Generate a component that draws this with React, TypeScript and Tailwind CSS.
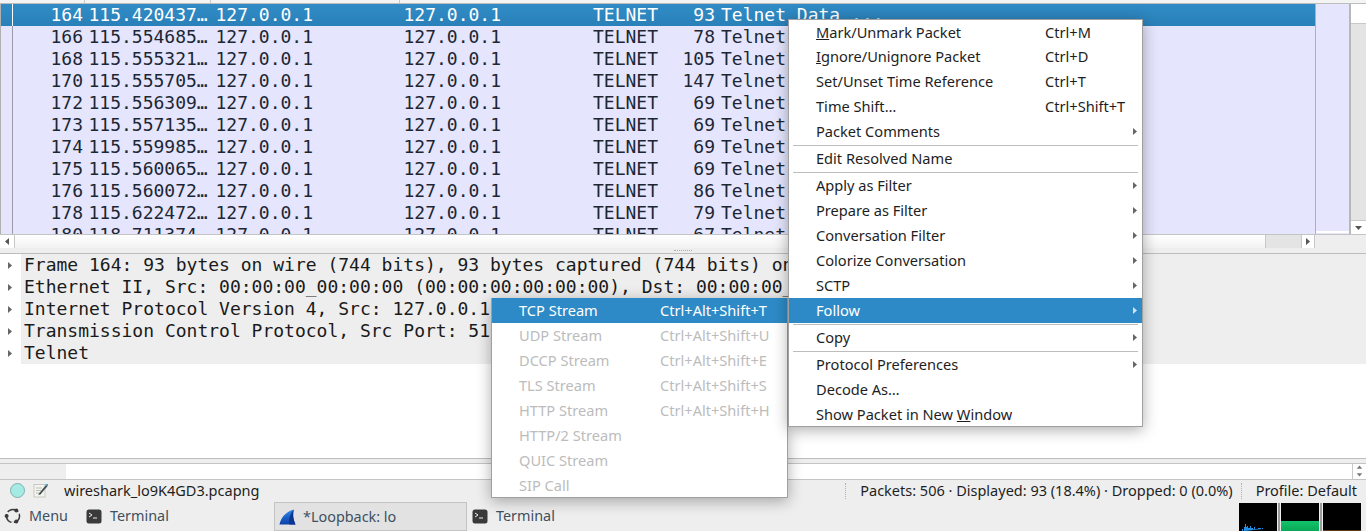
import React from "react";

const mono = "font-['DejaVu_Sans_Mono',monospace]";

const packets = [
  ["164", "115.420437…", "93"],
  ["166", "115.554685…", "78"],
  ["168", "115.555321…", "105"],
  ["170", "115.555705…", "147"],
  ["172", "115.556309…", "69"],
  ["173", "115.557135…", "69"],
  ["174", "115.559985…", "69"],
  ["175", "115.560065…", "69"],
  ["176", "115.560072…", "86"],
  ["178", "115.622472…", "79"],
  ["180", "118.711374…", "67"],
];

const details = [
  "Frame 164: 93 bytes on wire (744 bits), 93 bytes captured (744 bits) on interface lo, id 0",
  "Ethernet II, Src: 00:00:00_00:00:00 (00:00:00:00:00:00), Dst: 00:00:00_00:00:00 (00:00:00:00:00:00)",
  "Internet Protocol Version 4, Src: 127.0.0.1, Dst: 127.0.0.1",
  "Transmission Control Protocol, Src Port: 51234, Dst Port: 23, Seq: 1, Ack: 1, Len: 27",
  "Telnet",
];

const Tri = ({ dir, className }: { dir: "l" | "r" | "d" | "u"; className?: string }) => {
  const pts = { l: "6,1 2,4.5 6,8", r: "2,1 6,4.5 2,8", d: "1,3 8,3 4.5,7", u: "1,6 8,6 4.5,2" }[dir];
  return (
    <svg width="9" height="9" viewBox="0 0 9 9" className={className}>
      <polygon points={pts} fill="currentColor" />
    </svg>
  );
};

const PacketRow = ({ row, selected }: { row: string[]; selected: boolean }) => (
  <div
    className={`flex h-[22px] shrink-0 whitespace-pre text-[18px] leading-[21px] ${
      selected
        ? "bg-gradient-to-b from-[#308cc6] to-[#2a80b8] text-white"
        : "text-[#1c2733]"
    }`}
  >
    <div className={`h-full w-[12px] shrink-0 border-r ${selected ? "border-white" : "border-[#9a9aa8]"}`} />
    <div className="w-[70px] shrink-0 text-right">{row[0]}</div>
    <div className="ml-[5.5px] w-[127px] shrink-0">{row[1]}</div>
    <div className="w-[188px] shrink-0">127.0.0.1</div>
    <div className="w-[189.5px] shrink-0">127.0.0.1</div>
    <div className="w-[75px] shrink-0">TELNET</div>
    <div className="w-[47px] shrink-0 text-right">{row[2]}</div>
    <div className="ml-[6px]">Telnet Data ...</div>
  </div>
);

const DetailRow = ({ text }: { text: string }) => (
  <div className="flex h-[22px] items-center">
    <div className="flex w-[21px] shrink-0 justify-center bg-white text-[#666]">
      <Tri dir="r" />
    </div>
    <div className="h-full flex-1 overflow-hidden whitespace-pre bg-[#eeeeee] pl-[3px] text-[18px] leading-[22px] text-[#1a1a1a]">
      {text}
    </div>
  </div>
);

const MenuItem = ({
  label,
  shortcut,
  arrow,
  active,
  disabled,
  tall,
  keyX,
}: {
  label: React.ReactNode;
  shortcut?: string;
  arrow?: boolean;
  active?: boolean;
  disabled?: boolean;
  tall?: string;
  keyX: string;
}) => (
  <div
    className={`flex items-center whitespace-pre pl-[27px] leading-[20px] ${tall ?? "h-[25px]"} ${
      active
        ? "bg-[#2e8ac6] text-white"
        : disabled
          ? "text-[#bcbcbc]"
          : "text-[#1e1e1e]"
    }`}
  >
    <div className={`${keyX} shrink-0`}>{label}</div>
    {shortcut && <div>{shortcut}</div>}
    {arrow && (
      <Tri dir="r" className={`ml-auto mr-[2px] ${active ? "text-[#cfe3f2]" : "text-[#666]"}`} />
    )}
  </div>
);

const Sep = () => (
  <div className="flex h-[2px] items-center px-[4px]">
    <div className="h-[1px] w-full bg-[#bdbdbd]" />
  </div>
);

const MainItem = (p: { label: React.ReactNode; shortcut?: string; arrow?: boolean; active?: boolean; tall?: string }) => (
  <MenuItem {...p} tall={p.tall ?? "h-[25px] pb-[1px]"} keyX="w-[229px]" />
);

const SubItem = (p: { label: string; shortcut?: string; active?: boolean }) => (
  <MenuItem {...p} disabled={!p.active} keyX="w-[141px]" />
);

const ContextMenu = () => (
  <div className="absolute left-[788px] top-[19px] z-20 flex h-[408px] w-[355px] flex-col border border-[#a0a0a0] bg-white text-[14.6px] shadow-[0_3px_14px_rgba(0,0,0,0.32)]">
    <MainItem tall="h-[24px] pb-[1px]" label={<><u>M</u>ark/Unmark Packet</>} shortcut="Ctrl+M" />
    <MainItem label={<><u>I</u>gnore/Unignore Packet</>} shortcut="Ctrl+D" />
    <MainItem label="Set/Unset Time Reference" shortcut="Ctrl+T" />
    <MainItem label="Time Shift…" shortcut="Ctrl+Shift+T" />
    <MainItem label="Packet Comments" arrow />
    <Sep />
    <MainItem label="Edit Resolved Name" />
    <Sep />
    <MainItem label="Apply as Filter" arrow />
    <MainItem label="Prepare as Filter" arrow />
    <MainItem label="Conversation Filter" arrow />
    <MainItem label="Colorize Conversation" arrow />
    <MainItem label="SCTP" arrow />
    <MainItem label="Follow" arrow active />
    <Sep />
    <MainItem label="Copy" arrow />
    <Sep />
    <MainItem label="Protocol Preferences" arrow />
    <MainItem label="Decode As…" />
    <MainItem tall="h-[24px]" label={<>Show Packet in New <u>W</u>indow</>} />
  </div>
);

const FollowMenu = () => (
  <div className="absolute left-[491px] top-[298px] z-10 flex h-[200px] w-[297px] flex-col border-x border-b border-[#a0a0a0] bg-white text-[14.6px] shadow-[0_3px_14px_rgba(0,0,0,0.32)]">
    <SubItem label="TCP Stream" shortcut="Ctrl+Alt+Shift+T" active />
    <SubItem label="UDP Stream" shortcut="Ctrl+Alt+Shift+U" />
    <SubItem label="DCCP Stream" shortcut="Ctrl+Alt+Shift+E" />
    <SubItem label="TLS Stream" shortcut="Ctrl+Alt+Shift+S" />
    <SubItem label="HTTP Stream" shortcut="Ctrl+Alt+Shift+H" />
    <SubItem label="HTTP/2 Stream" />
    <SubItem label="QUIC Stream" />
    <SubItem label="SIP Call" />
  </div>
);

const TerminalIcon = () => (
  <svg width="16" height="15" viewBox="0 0 16 15" className="shrink-0">
    <rect x="0.5" y="0.5" width="15" height="14" rx="2.5" fill="#3a3a3a" />
    <path d="M3 4l3 2-3 2" stroke="#eee" strokeWidth="1" fill="none" />
    <path d="M7 9h4" stroke="#eee" strokeWidth="1" />
  </svg>
);

const MenuLogo = () => (
  <svg width="18" height="18" viewBox="0 0 18 18" className="shrink-0">
    <circle cx="9" cy="9" r="6.6" fill="none" stroke="#3a3a3a" strokeWidth="1.5" />
    <path d="M9 0v4M1 14l3.5-2M17 14l-3.5-2" stroke="#eeeeee" strokeWidth="2.4" transform="rotate(60 9 9)" />
    <circle cx="2.6" cy="9" r="2" fill="#3a3a3a" />
    <circle cx="12.3" cy="3.4" r="2" fill="#3a3a3a" />
    <circle cx="12.3" cy="14.6" r="2" fill="#3a3a3a" />
  </svg>
);

const SharkFin = () => (
  <svg width="17" height="16" viewBox="0 0 17 16" className="shrink-0">
    <defs>
      <linearGradient id="fin" x1="0" y1="0" x2="0" y2="1">
        <stop offset="0" stopColor="#2f86e8" />
        <stop offset="1" stopColor="#0b3fa8" />
      </linearGradient>
    </defs>
    <path d="M0.5 15.5C2 9 6 3 15 0.5c-1.5 4-1 10 1.5 15z" fill="url(#fin)" />
    <path d="M10.5 15.5c-1-5 0-10 4.5-15-1.5 4-1 10 1.5 15z" fill="#0a3590" />
  </svg>
);

const NoteIcon = () => (
  <svg width="15" height="15" viewBox="0 0 15 15" className="shrink-0">
    <rect x="1" y="1.5" width="11" height="12.5" fill="#f4f4ee" stroke="#b8b8b0" strokeWidth="0.7" />
    <path d="M3 5h6M3 7.5h5M3 10h4" stroke="#b0b0a8" strokeWidth="0.8" />
    <path d="M6 10.5L13 2l1.4 1.2-7 8.3-2 .6z" fill="#3f4a55" />
    <path d="M12 1h3v2.5z" fill="#3aa2d8" />
  </svg>
);

const Dots = () => <div className="h-[16px] w-0 border-l border-dotted border-[#b0b0b0]" />;

const GraphBox = ({ children }: { children?: React.ReactNode }) => (
  <div className="relative h-[28px] w-[38px] shrink-0 overflow-hidden bg-black">{children}</div>
);

const GraphSep = () => <div className="mx-[1px] h-[28px] w-[2px] bg-[#9c9c9c]" />;

export default function App() {
  return (
    <div className="relative flex h-[531px] w-[1366px] flex-col overflow-hidden bg-[#eeeeee] font-['Noto_Sans',sans-serif]">
      {/* header strip */}
      <div className="flex h-[4px] shrink-0 border-b border-[#bdbdbd] bg-[#f4f4f4]">
        <div className="h-full w-[85px] border-r border-[#c8c8c8]" />
        <div className="h-full w-[126px] border-r border-[#c8c8c8]" />
        <div className="h-full w-[189px] border-r border-[#c8c8c8]" />
      </div>

      {/* packet list */}
      <div className="flex h-[244px] shrink-0 flex-col">
        <div className="flex h-[230px] shrink-0">
          <div className={`w-[1316px] shrink-0 overflow-hidden border-x border-[#b0b0b0] bg-[#e5e5fd] ${mono}`}>
            <div className="flex flex-col">
              {packets.map((row, i) => (
                <PacketRow key={row[0]} row={row} selected={i === 0} />
              ))}
            </div>
          </div>
          <div className="w-[35px] shrink-0 border-r-2 border-[#b8b8b8] bg-[#e5e5fd]">
            <div className="mt-[227px] h-[2px] bg-white" />
          </div>
          <div className="flex w-[15px] shrink-0 flex-col">
            <div className="h-[19px] bg-white" />
            <div className="flex-1 border-t border-[#c8c8c8] bg-[#e4e4e4]" />
            <div className="flex h-[14px] items-center justify-center border-t border-[#c8c8c8] bg-white text-[#555]">
              <Tri dir="d" />
            </div>
          </div>
        </div>
        <div className="flex h-[15px] shrink-0 border-y border-[#c4c4c4]">
          <div className="flex w-[15px] items-center justify-center border-r border-[#c8c8c8] bg-white text-[#555]">
            <Tri dir="l" />
          </div>
          <div className="w-[1250px] bg-gradient-to-b from-white to-[#f2f2f2]" />
          <div className="w-[36px] border-l border-[#c8c8c8] bg-[#e4e4e4]" />
          <div className="flex w-[14px] items-center justify-center border-x border-[#c8c8c8] bg-white text-[#555]">
            <Tri dir="r" />
          </div>
          <div className="flex-1 bg-[#eeeeee]" />
        </div>
      </div>

      {/* splitter */}
      <div className="flex h-[5px] shrink-0 items-center justify-center bg-[#eeeeee]">
        <div className="h-[2px] w-[18px] border-t border-dotted border-[#aaaaaa]" />
      </div>

      {/* packet details */}
      <div className={`h-[206px] shrink-0 border-y border-[#bdbdbd] bg-white ${mono}`}>
        {details.map((d) => (
          <DetailRow key={d} text={d} />
        ))}
      </div>

      {/* hex pane scrollbar */}
      <div className="mt-[4px] flex h-[16px] shrink-0 border-t border-[#c4c4c4]">
        <div className="w-[66px] bg-[#eeeeee]" />
        <div className="flex-1 bg-white" />
        <div className="flex w-[14px] flex-col border-l border-[#c8c8c8] bg-white text-[#777]">
          <Tri dir="u" className="h-[7px] w-full" />
          <Tri dir="d" className="h-[7px] w-full" />
        </div>
      </div>

      {/* status bar */}
      <div className="flex h-[22px] shrink-0 items-center border-t border-[#c4c4c4] pl-[10px] pr-[9px] text-[14.5px] text-[#1e1e1e]">
        <div className="h-[15px] w-[15px] shrink-0 rounded-full border border-[#7fb0b0] bg-[#a6ebe3]" />
        <div className="ml-[8px]">
          <NoteIcon />
        </div>
        <div className="ml-[16px] whitespace-pre">wireshark_lo9K4GD3.pcapng</div>
        <div className="ml-auto">
          <Dots />
        </div>
        <div className="ml-[14px] whitespace-pre">Packets: 506 · Displayed: 93 (18.4%) · Dropped: 0 (0.0%)</div>
        <div className="ml-[8px]">
          <Dots />
        </div>
        <div className="ml-[14px] whitespace-pre">Profile: Default</div>
      </div>

      {/* taskbar */}
      <div className="flex h-[30px] shrink-0 items-end text-[14.4px] text-[#40505f]">
        <div className="flex h-full w-[274px] shrink-0 items-center pl-[4px]">
          <MenuLogo />
          <span className="ml-[7px]">Menu</span>
          <div className="ml-[18px]">
            <TerminalIcon />
          </div>
          <span className="ml-[8px]">Terminal</span>
        </div>
        <div className="flex h-[29px] w-[193px] shrink-0 items-center border border-[#c4c4c4] bg-[#e2e2e2] pl-[4px]">
          <SharkFin />
          <span className="ml-[7px]">*Loopback: lo</span>
        </div>
        <div className="flex h-full items-center pl-[5px]">
          <TerminalIcon />
          <span className="ml-[8px]">Terminal</span>
        </div>
        <div className="ml-auto mr-[5px] flex">
          <GraphBox>
            <svg width="38" height="28" viewBox="0 0 38 28" className="absolute inset-0">
              <path d="M3 28v-2h1v2h1v-4h1v-3h1v3h1v-1h1v2h2v-2h1v2h2v1h1v-2h1v2h3v-1h3v1h1v-1h1v1z" fill="#1e90e8" />
            </svg>
          </GraphBox>
          <GraphSep />
          <GraphBox>
            <div className="absolute inset-x-0 bottom-0 h-[10px] bg-gradient-to-b from-[#12c46a] to-[#0aa858]" />
          </GraphBox>
          <GraphSep />
          <GraphBox>
            <div className="absolute inset-x-0 bottom-0 h-[1px] bg-[#5a3a1a]" />
          </GraphBox>
        </div>
      </div>

      <FollowMenu />
      <ContextMenu />
    </div>
  );
}
